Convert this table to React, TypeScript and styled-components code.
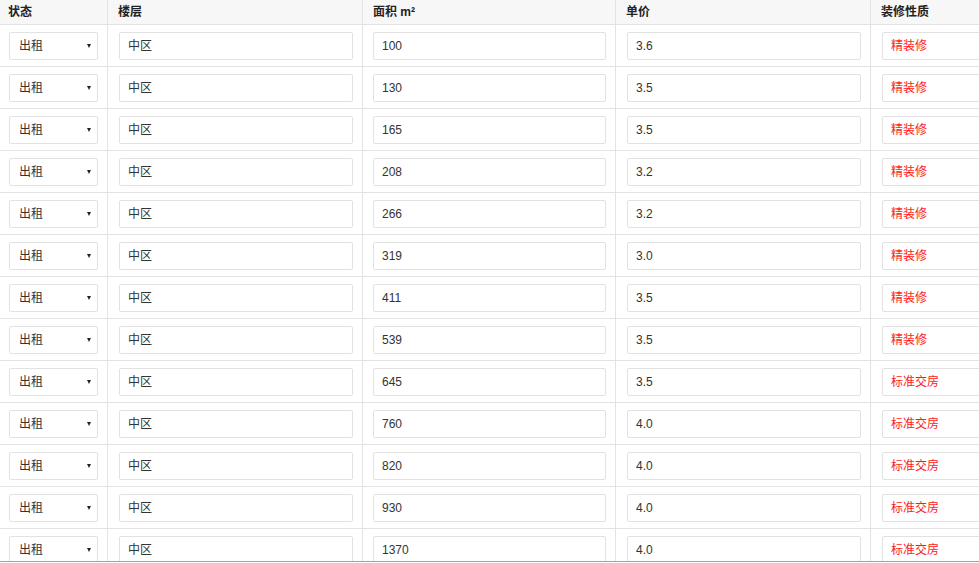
import React from "react";
import styled, { createGlobalStyle } from "styled-components";

const GlobalStyle = createGlobalStyle`
  html, body {
    margin: 0;
    padding: 0;
    background: #fff;
  }
  body {
    font-family: "Liberation Sans", Arial, "Noto Sans CJK SC", sans-serif;
    font-size: 12px;
    color: #333;
    overflow: hidden;
  }
`;

const rows = [
  { area: "100", price: "3.6", deco: "精装修" },
  { area: "130", price: "3.5", deco: "精装修" },
  { area: "165", price: "3.5", deco: "精装修" },
  { area: "208", price: "3.2", deco: "精装修" },
  { area: "266", price: "3.2", deco: "精装修" },
  { area: "319", price: "3.0", deco: "精装修" },
  { area: "411", price: "3.5", deco: "精装修" },
  { area: "539", price: "3.5", deco: "精装修" },
  { area: "645", price: "3.5", deco: "标准交房" },
  { area: "760", price: "4.0", deco: "标准交房" },
  { area: "820", price: "4.0", deco: "标准交房" },
  { area: "930", price: "4.0", deco: "标准交房" },
  { area: "1370", price: "4.0", deco: "标准交房" },
];

const Viewport = styled.div`
  height: 561px;
  overflow: hidden;
  border-bottom: 1px solid #a3a3a3;
`;

const Table = styled.div`
  display: grid;
  grid-template-columns: 107px 255px 253px 255px 140px;
  width: 1010px;
`;

const HeadCell = styled.div<{ $first?: boolean }>`
  height: 25px;
  box-sizing: border-box;
  padding-left: ${(p) => (p.$first ? "8px" : "10px")};
  display: flex;
  align-items: center;
  background: #f7f7f7;
  border-bottom: 1px solid #e3e3e3;
  border-left: ${(p) => (p.$first ? "none" : "1px solid #e3e3e3")};
  font-weight: bold;
  color: #222;
  font-family: "Liberation Sans", Arial, "Noto Sans CJK SC", sans-serif;
  font-size: 12px;
  line-height: 16px;
`;

const Cell = styled.div<{ $first?: boolean; $pad?: number }>`
  height: 42px;
  box-sizing: border-box;
  padding: 7px 9px 0 ${(p) => (p.$first ? 9 : p.$pad ?? 11)}px;
  border-bottom: 1px solid #e3e3e3;
  border-left: ${(p) => (p.$first ? "none" : "1px solid #e3e3e3")};
`;

const Field = styled.div<{ $red?: boolean }>`
  height: 28px;
  box-sizing: border-box;
  border: 1px solid #e2e2e2;
  border-radius: 2px;
  background: #fff;
  padding-left: 8px;
  display: flex;
  align-items: center;
  color: ${(p) => (p.$red ? "#ff1a1a" : "#333")};
  font-family: "Liberation Sans", Arial, "Noto Sans CJK SC", sans-serif;
  font-size: 12px;
  line-height: 14px;
`;

const Select = styled(Field)`
  padding-left: 9px;
  padding-right: 6px;
  justify-content: space-between;
`;

const Caret = styled.span`
  width: 0;
  height: 0;
  border-left: 2.5px solid transparent;
  border-right: 2.5px solid transparent;
  border-top: 4px solid #222;
`;

export default function App() {
  return (
    <>
      <GlobalStyle />
      <Viewport>
        <Table>
          <HeadCell $first>状态</HeadCell>
          <HeadCell>楼层</HeadCell>
          <HeadCell>面积 m²</HeadCell>
          <HeadCell>单价</HeadCell>
          <HeadCell>装修性质</HeadCell>
          {rows.map((r, i) => (
            <React.Fragment key={i}>
              <Cell $first>
                <Select>
                  <span>出租</span>
                  <Caret />
                </Select>
              </Cell>
              <Cell>
                <Field>中区</Field>
              </Cell>
              <Cell $pad={10}>
                <Field>{r.area}</Field>
              </Cell>
              <Cell>
                <Field>{r.price}</Field>
              </Cell>
              <Cell>
                <Field $red>{r.deco}</Field>
              </Cell>
            </React.Fragment>
          ))}
        </Table>
      </Viewport>
    </>
  );
}
